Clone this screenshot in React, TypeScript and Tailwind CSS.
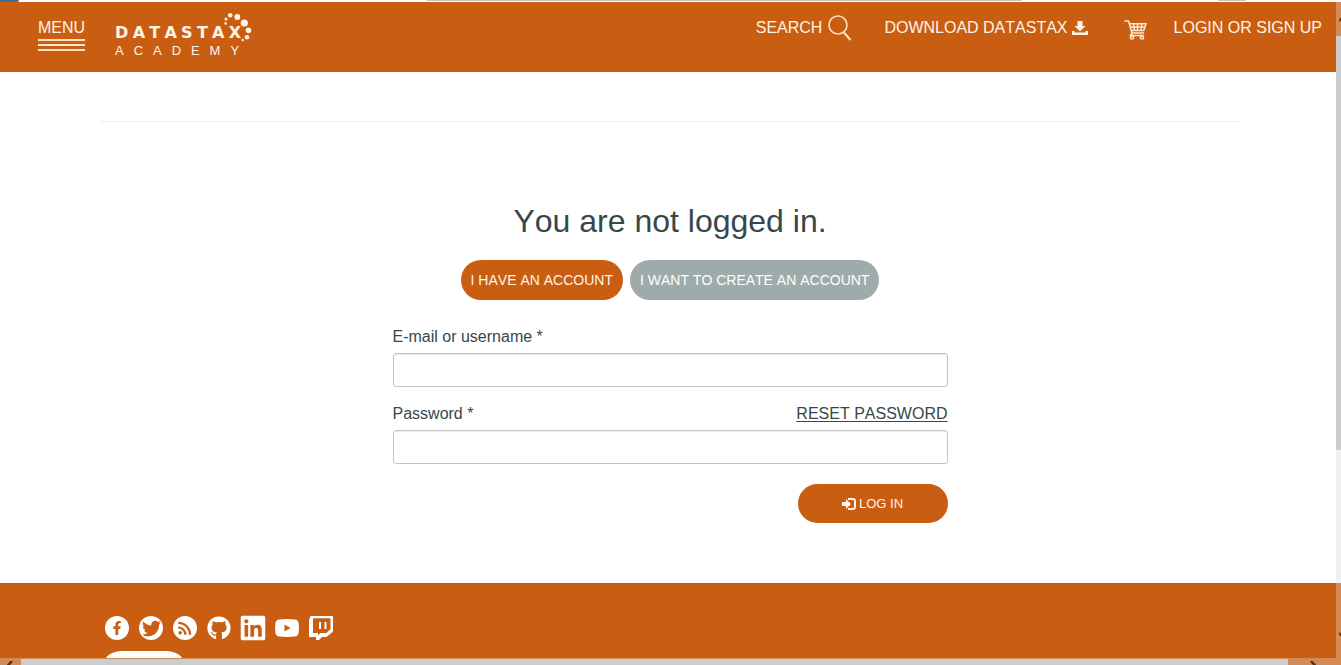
import React from "react";
import { FaFacebookF, FaGithub, FaLinkedin, FaTwitter } from "react-icons/fa";
import { MdRssFeed } from "react-icons/md";

function Letters({ text, className }: { text: string; className: string }) {
  return (
    <span className={`flex justify-between ${className}`}>
      {text.split("").map((c, i) => (
        <span key={i}>{c}</span>
      ))}
    </span>
  );
}

function Logo() {
  return (
    <a href="#home" aria-label="DataStax Academy" className="relative block w-[126px] pt-[22px]">
      <Letters text="DATASTAX" className="font-['DejaVu_Sans',sans-serif] text-[16px] leading-[18px] font-bold" />
      <Letters text="ACADEMY" className="w-[124px] pt-px text-[13px] leading-4" />
      <svg className="absolute top-[10px] left-[106px]" width="32" height="32" viewBox="0 0 32 32" fill="currentColor" aria-hidden="true">
        <circle cx="4.5" cy="11.5" r="1.2" />
        <circle cx="5" cy="7" r="1.5" />
        <circle cx="9.2" cy="3.3" r="2.3" />
        <circle cx="16.3" cy="5" r="2.9" />
        <circle cx="23.3" cy="11" r="3.6" />
        <circle cx="27.5" cy="18.3" r="2.8" />
        <circle cx="26" cy="25.2" r="2.3" />
        <circle cx="21.7" cy="28" r="1.2" />
      </svg>
    </a>
  );
}

function SearchIcon() {
  return (
    <svg width="24" height="26" viewBox="0 0 24 26" fill="none" stroke="#ffe0c0" strokeWidth="1.6" aria-hidden="true">
      <circle cx="10" cy="10" r="9" />
      <path d="M15.500 17 22.500 25" strokeWidth="2" />
    </svg>
  );
}

function DownloadIcon() {
  return (
    <svg width="16" height="15" viewBox="0 0 16 15" fill="currentColor" aria-hidden="true">
      <path d="M5.500 0h5v5h3L8 10.500 2.500 5h3z" />
      <path d="M0 10h2.500v1.500h11V10H16v4H0z" />
    </svg>
  );
}

function CartIcon() {
  return (
    <svg width="23" height="20" viewBox="0 0 23 20" fill="none" stroke="#ffe9d2" strokeWidth="1.5" aria-hidden="true">
      <path d="M0.500 1h4l3.500 12h12" />
      <path d="M5 3.800h17l-2.200 6.700H7" />
      <path d="M6 7h15M9.500 4l1 6.500M13.500 4v6.500M17.800 4l-.8 6.500" />
      <path d="M8 13l-1.500 2.500h13" />
      <circle cx="8" cy="17.500" r="1.6" />
      <circle cx="18" cy="17.500" r="1.6" />
    </svg>
  );
}

function LoginIcon() {
  return (
    <svg width="14" height="14" viewBox="0 0 14 14" aria-hidden="true">
      <path d="M0 5h4V2l5 5-5 5V9H0z" fill="currentColor" />
      <path d="M6 2h5q2 0 2 2v6q0 2-2 2H6" fill="none" stroke="currentColor" strokeWidth="2" />
    </svg>
  );
}

function YoutubeIcon() {
  return (
    <svg width="24" height="24" viewBox="0 0 24 24" aria-hidden="true">
      <path
        fillRule="evenodd"
        fill="currentColor"
        d="M4 3.500Q12 2.700 20 3.500 23.200 3.800 23.600 7.500 24.200 12 23.600 16.500 23.200 20.200 20 20.500 12 21.300 4 20.500.8 20.200.4 16.500-.2 12 .4 7.500.8 3.800 4 3.500zM9.500 8.500v7l6-3.500z"
      />
    </svg>
  );
}

function TwitchIcon() {
  return (
    <svg width="24" height="24" viewBox="0 0 24 24" aria-hidden="true">
      <path
        fillRule="evenodd"
        fill="currentColor"
        d="M1.500 0H24v15.500L17.500 21H13l-3 3H7v-3H0V4zM4 2.200V17h5v2.500l2.500-2.500h6l4-4V2.200z"
      />
      <path fill="currentColor" d="M10 6h2v7h-2zM15.500 6h2v7h-2z" />
    </svg>
  );
}

function Disc({ children }: { children: React.ReactNode }) {
  return <span className="flex size-6 items-center justify-center rounded-full bg-white text-[#c95e12]">{children}</span>;
}

const socials = [
  { name: "Facebook", icon: <Disc><FaFacebookF size={14} /></Disc> },
  { name: "Twitter", icon: <Disc><FaTwitter size={19} /></Disc> },
  { name: "RSS", icon: <Disc><MdRssFeed size={20} /></Disc> },
  { name: "GitHub", icon: <FaGithub size={24} /> },
  { name: "LinkedIn", icon: <FaLinkedin size={28} className="-m-0.5 shrink-0" /> },
  { name: "YouTube", icon: <YoutubeIcon /> },
  { name: "Twitch", icon: <TwitchIcon /> },
];

function Header() {
  return (
    <header className="flex h-[70px] shrink-0 items-start justify-between bg-[#c95e12] pr-[14px] pl-[38px] text-base text-[#fff4e6]">
      <div className="flex items-start gap-[30px]">
        <button type="button" className="flex flex-col pt-[14px] leading-6">
          MENU
          <span className="mt-[-1px] flex w-full flex-col gap-[3px]" aria-hidden="true">
            <span className="h-[2px] bg-[#ffe3c4]" />
            <span className="h-[2px] bg-[#ffe3c4]" />
            <span className="h-[2px] bg-[#ffe3c4]" />
          </span>
        </button>
        <Logo />
      </div>
      <nav className="flex items-center pt-[13px] leading-6">
        <a href="#search" className="flex items-center gap-1.5">
          SEARCH <SearchIcon />
        </a>
        <a href="#download" className="ml-8 flex items-center gap-1">
          DOWNLOAD DATASTAX <DownloadIcon />
        </a>
        <a href="#cart" aria-label="Cart" className="mt-1 ml-9">
          <CartIcon />
        </a>
        <a href="#login" className="ml-[27px]">
          LOGIN OR SIGN UP
        </a>
      </nav>
    </header>
  );
}

const inputClass =
  "h-[34px] w-full rounded-[3px] border border-[#c4c4c4] bg-white px-3 text-base shadow-[inset_0_1px_1px_rgba(0,0,0,0.08)] outline-none";

function LoginForm() {
  return (
    <form className="mx-auto mt-[25px] w-full max-w-[555px] leading-6" onSubmit={(e) => e.preventDefault()}>
      <label htmlFor="user" className="mb-1 block">
        E-mail or username *
      </label>
      <input id="user" type="text" className={inputClass} />
      <div className="mt-[15px] mb-1 flex justify-between">
        <label htmlFor="pass">Password *</label>
        <a href="#reset" className="underline underline-offset-2">
          RESET PASSWORD
        </a>
      </div>
      <input id="pass" type="password" className={inputClass} />
      <div className="mt-5 flex justify-end">
        <button
          type="submit"
          className="flex h-[39px] w-[150px] items-center justify-center gap-[3px] rounded-full bg-[#c95e12] text-[13px] text-[#fff4e6]"
        >
          <LoginIcon /> LOG IN
        </button>
      </div>
    </form>
  );
}

function Footer() {
  return (
    <footer className="mt-[60px] min-h-[180px] flex-1 bg-[#c95e12] pt-[33px] pl-[105px] text-white">
      <ul className="flex gap-[10px]">
        {socials.map((s) => (
          <li key={s.name}>
            <a href="#social" aria-label={s.name} className="flex size-6 items-center justify-center">
              {s.icon}
            </a>
          </li>
        ))}
      </ul>
      <div className="mt-[11px] -ml-1 h-10 w-[86px] rounded-full bg-white" />
    </footer>
  );
}

export default function App() {
  return (
    <div className="flex h-screen flex-col overflow-hidden bg-white font-['Liberation_Sans',Arial,sans-serif] text-[#36474b] [font-kerning:none]">
      <div className="flex h-[2px] shrink-0" aria-hidden="true">
        <span className="w-[19px] rounded-br-sm bg-[#3f7290]" />
        <span className="ml-[408px] h-px w-[595px] bg-[#c4c4c4]" />
        <span className="ml-[196px] h-px w-7 bg-[#c4c4c4]" />
      </div>
      <div className="flex min-h-0 flex-1">
        <div className="flex min-w-0 flex-1 flex-col overflow-hidden">
          <Header />
          <main className="shrink-0 pt-[49px] pr-[96px] pl-[100px]">
            <hr className="border-[#eeeeee]" />
            <h1 className="mt-[79px] text-center text-[32px] leading-10">You are not logged in.</h1>
            <div className="mt-[19px] flex justify-center gap-[7px] text-sm">
              <button type="button" className="h-10 rounded-full bg-[#c95e12] px-[10px] text-[#fff4e6]">
                I HAVE AN ACCOUNT
              </button>
              <button type="button" className="h-10 rounded-full bg-[#9eabaa] px-[10px] text-white">
                I WANT TO CREATE AN ACCOUNT
              </button>
            </div>
            <LoginForm />
          </main>
          <Footer />
        </div>
        <div className="flex w-[5px] shrink-0 flex-col overflow-hidden bg-[#f0f0f0]" aria-hidden="true">
          <div className="flex h-[34px] items-center bg-[#d38b58] pl-[3px]">
            <svg width="8" height="6" viewBox="0 0 8 6" fill="none" stroke="#5c3010" strokeWidth="2" className="shrink-0">
              <path d="M0 5l4-4 4 4" />
            </svg>
          </div>
          <div className="h-[414px] bg-[#cdcdcd]" />
          <div className="mt-[133px] flex flex-1 items-end bg-[#d38b58] pb-5 pl-[3px]">
            <svg width="8" height="6" viewBox="0 0 8 6" fill="none" stroke="#5c3010" strokeWidth="2" className="shrink-0">
              <path d="M0 1l4 4 4-4" />
            </svg>
          </div>
        </div>
      </div>
      <div className="flex h-[7px] shrink-0 overflow-hidden bg-[#d38b58]" aria-hidden="true">
        <div className="w-[21px] pt-[3px] pl-[5px]">
          <svg width="8" height="12" viewBox="0 0 8 12" fill="none" stroke="#5c3010" strokeWidth="2.5">
            <path d="M7 0 1.500 6 7 12" />
          </svg>
        </div>
        <div className="mt-px flex-1 bg-[#cdcdcd]" />
        <div className="w-[53px] pt-[3px] pl-[22px]">
          <svg width="8" height="12" viewBox="0 0 8 12" fill="none" stroke="#5c3010" strokeWidth="2.5">
            <path d="M1 0l5.500 6L1 12" />
          </svg>
        </div>
      </div>
    </div>
  );
}
